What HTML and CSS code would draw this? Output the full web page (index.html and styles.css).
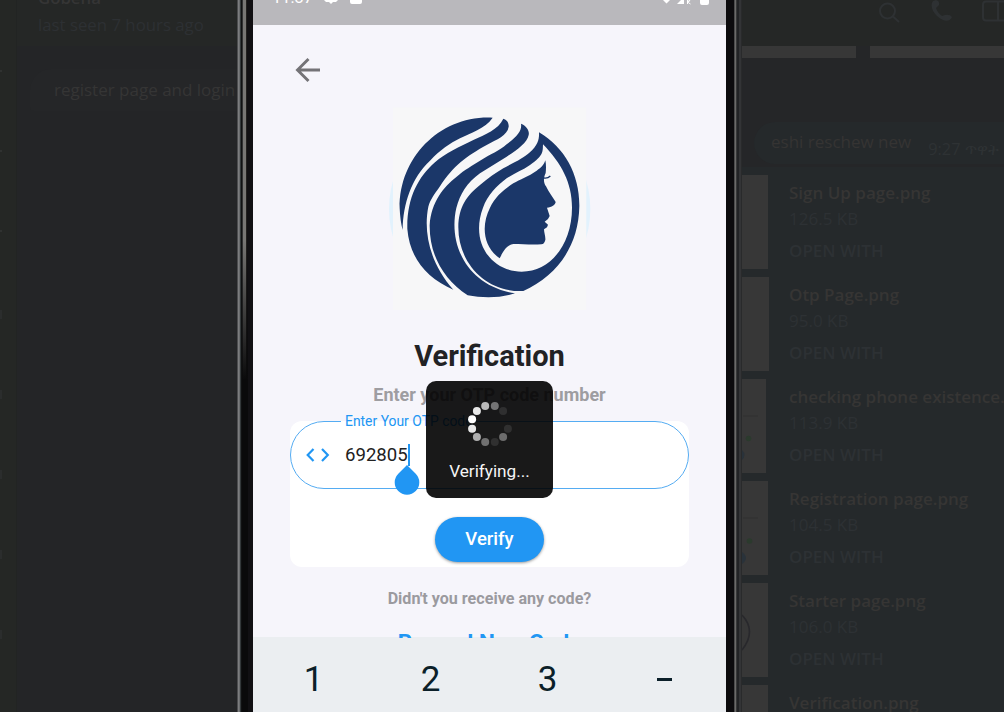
FILE: index.html
```html
<!DOCTYPE html>
<html lang="en">
<head>
<meta charset="utf-8">
<title>Verification</title>
<link rel="stylesheet" href="styles.css">
</head>
<body>
<div class="desktop">
  <aside class="rail"><i></i><i></i><i></i><i></i><i></i><i></i><i></i><i></i></aside>
  <section class="chat">
    <header class="chat-head"><div class="chat-name">Gobena</div><div class="chat-seen">last seen 7 hours ago</div></header>
    <div class="chat-msg"><span>register page and login</span></div>
  </section>

  <main class="phone">
    <div class="bezel bezel-left"></div>
    <div class="screen">
      <div class="status">
        <span class="clock">11:37</span>
        <svg class="status-left" width="46" height="6" viewBox="0 0 46 6"><path d="M0 0H14L12 2H9L7 4L5 2H2Z M26 0H38V2Q38 4 36 4H28Q26 4 26 2Z" fill="#fff"/></svg>
        <svg class="status-right" width="48" height="6" viewBox="0 0 48 6"><path d="M1 0H8L4.500 3.500Z M15 4L19 0H22V4Z M38 0H47V3Q47 5 45 5H40Q38 5 38 3Z" fill="#fff"/><path d="M25.500 4V0H27.500Q29 1 25.500 2L28.500 4" fill="none" stroke="#fff" stroke-width="1"/></svg>
      </div>
      <div class="content">
        <svg class="back" width="26" height="26" viewBox="0 0 26 26"><path d="M25 13H3M13.500 2L2.500 13L13.500 24" fill="none" stroke="#747377" stroke-width="2.900"/></svg>
        <div class="logo">
          <svg width="210" height="205" viewBox="0 0 630 615">
            <circle cx="314" cy="312" r="302" fill="#e2f2fd"/>
            <rect x="24" y="7" width="580" height="608" fill="#f7f7f8"/>
            <g fill="#1b3769">
              <path d="M323 38C170 30 42 153 44 310C45 335 48 358 53 375C54 296 80 218 135 167C165 135 195 115 225 100C255 84 300 72 323 38Z"/>
              <path d="M355 41C365 44 372 53 371 65C367 92 335 103 305 120C245 153 205 182 165 244C148 268 136 284 130 305C114 385 137 478 205 554C126 520 74 460 67 372C65 281 99 216 150 172C180 145 225 125 265 105C300 88 340 74 355 41Z"/>
              <path d="M408 56C425 63 434 78 431 90C427 113 395 136 365 155L285 205C245 234 225 268 214 309C190 413 241 541 390 565C345 580 292 579 248 571C174 522 133 448 134 360C139 290 176 245 215 215C240 193 262 182 285 167C315 149 345 136 365 118C400 91 411 76 408 56Z"/>
              <path fill-rule="evenodd" d="M462 82C540 128 584 210 583 304C581 426 514 513 415 558C305 563 220 477 220 367C221 303 246 272 285 240C310 218 333 204 355 190C395 168 417 158 433 143C460 120 463 100 462 82ZM474 118C473 141 476 152 435 180C412 196 389 204 365 220C335 243 308 270 294 308C254 414 321 500 410 500C499 500 561 414 561 308C561 233 529 175 474 118Z"/>
              <path d="M481 166C484 181 483 193 482 204C475 219 475 233 483 244C492 263 504 278 512 291C511 300 500 307 486 308L494 333L489 342L479 350L489 359L486 367L477 373C477 383 482 394 481 405C479 413 475 418 469 418C440 420 410 417 386 417C363 420 353 443 344 460C294 425 288 361 315 308C330 276 358 252 385 235C405 223 430 215 455 197C470 187 477 179 481 166Z"/>
            </g>
            <path d="M476 219Q488 221 496 213" fill="none" stroke="#1b3769" stroke-width="4"/>
          </svg>
        </div>
        <h1 class="title">Verification</h1>
        <p class="subtitle">Enter your OTP code number</p>
        <div class="card">
          <div class="field">
            <span class="field-label">Enter Your OTP code</span>
            <svg class="code-icon" width="24" height="14" viewBox="0 0 24 14"><path d="M7.500 1L1.700 7L7.500 13M16 1L21.800 7L16 13" fill="none" stroke="#2196f3" stroke-width="2.200"/></svg>
            <span class="value">692805</span><span class="caret"></span>
            <svg class="handle" width="26" height="30" viewBox="0 0 26 30"><path d="M13 0L21.500 8.500A12.300 12.300 0 1 1 4.500 8.500Z" fill="#2196f3"/></svg>
          </div>
          <button class="verify">Verify</button>
        </div>
        <p class="hint">Didn't you receive any code?</p>
        <div class="resend">Resend New Code</div>
      </div>
      <div class="keys"><span>1</span><span>2</span><span>3</span><span class="dash"></span></div>
      <div class="toast">
        <svg width="46" height="46" viewBox="-23 -23 46 46" fill="#fff">
          <circle cx="-4.800" cy="-17.900" r="4" opacity=".7"/><circle cx="4.800" cy="-17.900" r="4" opacity=".4"/><circle cx="13.100" cy="-13.100" r="4" opacity=".1"/><circle cx="17.900" cy="4.800" r="4" opacity=".1"/><circle cx="13.100" cy="13.100" r="4" opacity=".36"/><circle cx="4.800" cy="17.900" r="4" opacity=".1"/><circle cx="-4.800" cy="17.900" r="4" opacity=".38"/><circle cx="-13.100" cy="13.100" r="4" opacity=".65"/><circle cx="-17.900" cy="4.800" r="4" opacity=".9"/><circle cx="-17.900" cy="-4.800" r="4"/><circle cx="-13.100" cy="-13.100" r="4" opacity=".9"/>
        </svg>
        <span>Verifying...</span>
      </div>
    </div>
    <div class="bezel bezel-right"></div>
  </main>

  <section class="files">
    <header class="files-head">
      <svg width="262" height="46" viewBox="0 0 262 46" fill="none" stroke="#2e3133" stroke-width="2"><circle cx="145.500" cy="11" r="7.500"/><path d="M151 16.500L157 22"/><path d="M191 1C187 6 192 16 201 20C205 22 209 20 210 17Q208 14 203 15L200 16C197 14 195 11 194 8L197 5Q198 1 194 0Z" fill="#2e3133" stroke="none"/><rect x="241" y="1.500" width="26" height="19" rx="3"/><path d="M256 2V20"/></svg>
    </header>
    <div class="strip"><i></i><i></i></div>
    <div class="reply"><span>eshi reschew new</span><small>9:27 ጥዋት</small></div>
    <div class="list">
      <article class="file"><div class="thumb"></div><div><h2>Sign Up page.png</h2><p>126.5 KB</p><b>OPEN WITH</b></div></article>
      <article class="file"><div class="thumb wide"></div><div><h2>Otp Page.png</h2><p>95.0 KB</p><b>OPEN WITH</b></div></article>
      <article class="file"><div class="thumb narrow"><svg width="24" height="94"><circle cx="6.500" cy="59.500" r="2.800" fill="#2b3a2d"/><path d="M0 71Q5 76 0 81Z" fill="#29323a"/><path d="M1 37H16" stroke="#303031"/></svg></div><div><h2>checking phone existence.</h2><p>113.9 KB</p><b>OPEN WITH</b></div></article>
      <article class="file"><div class="thumb"><svg width="26" height="94"><circle cx="7.500" cy="60" r="2.800" fill="#2b3a2d"/><path d="M0 71Q8 77 0 83Z" fill="#29323a"/><path d="M1 37H16" stroke="#303031"/></svg></div><div><h2>Registration page.png</h2><p>104.5 KB</p><b>OPEN WITH</b></div></article>
      <article class="file"><div class="thumb"><svg width="26" height="94"><path d="M0 32Q15 48 0 67" fill="none" stroke="#28282c" stroke-width="1.600"/></svg></div><div><h2>Starter page.png</h2><p>106.0 KB</p><b>OPEN WITH</b></div></article>
      <article class="file"><div class="thumb"></div><div><h2>Verification.png</h2></div></article>
    </div>
  </section>
</div>
</body>
</html>
```

FILE: styles.css
```css
* { box-sizing: border-box; }
body { margin: 0; background: #242527; font-family: "Open Sans", "Noto Sans", sans-serif; }
h1, h2, p { margin: 0; }
svg { display: block; }
.desktop { display: grid; grid-template-columns: 16px 221px 505px 262px; width: 1004px; height: 712px; overflow: hidden; }

.rail { background: #252725; padding-top: 70px; display: flex; flex-direction: column; gap: 78px; }
.rail i { flex: none; width: 2px; height: 2px; background: #303231; }
.rail i:nth-child(n+4) { height: 9px; margin-bottom: -7px; background: #2b2d2d; }
.chat { overflow: hidden; white-space: nowrap; border-left: 1px solid #222423; background: #242527; display: flex; flex-direction: column; }
.chat-head { height: 46px; flex: none; background: #252726; padding-left: 21px; font-size: 16.800px; line-height: 26px; color: #2d3033; }
.chat-name { margin-top: -15px; font-weight: 600; color: #353535; }
.chat-seen { font-size: 16.800px; margin-top: 1px; }
.chat-msg { margin: 23px 0 0 13px; height: 42px; padding-left: 24px; line-height: 42px; font-size: 17px; color: #353535; background: #252628; border-radius: 21px 0 0 4px; }

.phone { display: grid; grid-template-columns: 16px 473px 16px; font-family: Roboto, sans-serif; }
.bezel-left { background: linear-gradient(transparent 240px, #0a0a0b 380px) 5px 0 / 6px 100% no-repeat, linear-gradient(90deg, #4c4d4f 0 1px, #7c7d7f 1px 2px, #6b6d6f 2px 3px, #33383a 3px 4px, #101112 4px 5px, #303132 5px 6px, #777674 6px 9px, #22211f 9px 10px, #111013 10px); }
.bezel-right { background: linear-gradient(90deg, #0c0b0d 0 8px, #4b4b4b 8px 9px, #6b6a69 9px 10px, #373838 10px 11px, #222325 11px 13px, #333436 13px 15px, #292a2b 15px); }
.screen { position: relative; height: 712px; overflow: hidden; display: flex; flex-direction: column; background: #f6f5fb; }
.status { height: 25px; flex: none; background: #b9b8bc; display: flex; align-items: flex-start; color: #fff; padding: 0 16px 0 19px; }
.clock { font-size: 16.500px; line-height: 16px; margin-top: -10px; width: 52px; }
.status-left { margin-right: auto; }
.content { height: 612px; flex: none; padding: 0 37px; display: flex; flex-direction: column; align-items: center; }
.back { align-self: flex-start; margin: 32px 0 0 5px; flex: none; }
.logo { margin-top: 22px; flex: none; align-self: flex-start; margin-left: 95px; height: 205px; }
.title { margin-top: 29px; font-size: 29px; line-height: 34px; font-weight: 700; color: #222224; flex: none; }
.subtitle { margin-top: 11px; font-size: 18px; line-height: 22px; font-weight: 700; color: #9e9da1; }
.card { margin-top: 15px; width: 399px; height: 146px; flex: none; border-radius: 12px; background: #fff; display: flex; flex-direction: column; align-items: center; }
.field { position: relative; width: 399px; height: 68px; flex: none; display: flex; align-items: center; border: 1.500px solid #55acf2; border-radius: 34px; padding-left: 15px; }
.field-label { position: absolute; left: 50px; top: -9px; width: 133px; padding-left: 4px; background: linear-gradient(#f6f5fb 8px, #fff 8px); color: #2196f3; font-size: 13.900px; line-height: 17px; white-space: nowrap; }
.value { margin-left: 15px; font-size: 18.600px; color: #222; line-height: 24px; }
.caret { width: 2px; height: 22px; background: #2196f3; }
.handle { position: absolute; left: 103px; top: 43px; }
.verify { margin-top: 28px; width: 109px; height: 45px; flex: none; border: 0; border-radius: 23px; background: #2196f3; color: #fff; font: 500 18.500px Roboto, sans-serif; padding-bottom: 2px; box-shadow: 0 1px 3px #0006; }
.hint { margin-top: 22px; font-size: 16.100px; line-height: 20px; font-weight: 700; color: #9b9a9f; }
.resend { position: relative; z-index: 1; margin-top: 25px; height: 4px; flex: none; overflow: hidden; color: #2196f3; font-size: 22.500px; line-height: 16px; font-weight: 700; }
.keys { flex: 1; display: grid; grid-template-columns: repeat(4, 117px); padding: 10px 0 0 2px; align-items: center; justify-items: center; background: #ebeef1; color: #0b1f29; font-size: 35px; }
.dash { width: 15px; height: 2.500px; background: #0b1f29; }
.toast { position: absolute; left: 173px; top: 381px; width: 127px; height: 117px; padding-top: 20px; border-radius: 10px; background: #000000e6; color: #f5f5f5; display: flex; flex-direction: column; align-items: center; gap: 13px; font-size: 17.200px; line-height: 22px; }

.files { display: flex; flex-direction: column; overflow: hidden; background: #252628; white-space: nowrap; }
.files-head { height: 46px; flex: none; background: #252726; }
.strip { height: 12px; flex: none; display: grid; grid-template-columns: 114px 134px; gap: 14px; }
.strip i { background: #373737; }
.reply { margin: 64px 0 0 12px; height: 42px; flex: none; display: flex; align-items: center; gap: 17px; padding-left: 17px; border-radius: 21px 0 0 21px; background: #25292b; color: #353433; font-size: 17px; line-height: 40px; }
.reply span { margin-top: -2px; }
.reply small { font-size: 16.300px; line-height: 24px; color: #2e3234; padding-top: 11px; }
.list { margin-top: 3px; padding-top: 8px; background: #25292b; display: flex; flex-direction: column; gap: 8px; flex: none; }
.file { height: 94px; display: grid; grid-template-columns: 27px 1fr; gap: 20px; color: #2d3134; font-size: 17px; }
.thumb { width: 26px; height: 94px; background: #373737; }
.wide { width: 27px; }
.narrow { width: 24px; }
.file h2 { margin-top: 5px; font-size: 17px; font-weight: 600; line-height: 26px; color: #363534; }
.file p { line-height: 26px; }
.file b { display: block; margin-top: 6px; line-height: 26px; font-weight: 600; font-size: 17px; }
```
